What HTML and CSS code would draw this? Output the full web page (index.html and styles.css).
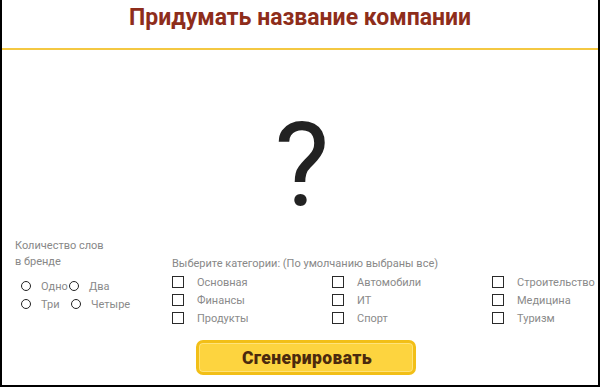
FILE: index.html
```html
<!DOCTYPE html>
<html lang="ru">
<head>
<meta charset="utf-8">
<title>Придумать название компании</title>
<link rel="stylesheet" href="styles.css">
</head>
<body>
<div class="frame">
  <header class="top">
    <h1 class="title">Придумать название компании</h1>
  </header>
  <div class="result">?</div>
  <section class="options">
    <div class="words">
      <div class="caption">Количество слов<br>в бренде</div>
      <div class="radios">
        <div class="radio-row">
          <label class="radio r1"><span class="circle"></span><span class="rtext">Одно</span></label>
          <label class="radio"><span class="circle"></span><span class="rtext">Два</span></label>
        </div>
        <div class="radio-row">
          <label class="radio r1 wide"><span class="circle"></span><span class="rtext">Три</span></label>
          <label class="radio"><span class="circle"></span><span class="rtext">Четыре</span></label>
        </div>
      </div>
    </div>
    <div class="cats">
      <div class="caption">Выберите категории: (По умолчанию выбраны все)</div>
      <div class="cat-grid">
        <label class="cat"><span class="box"></span>Основная</label>
        <label class="cat"><span class="box"></span>Автомобили</label>
        <label class="cat"><span class="box"></span>Строительство</label>
        <label class="cat"><span class="box"></span>Финансы</label>
        <label class="cat"><span class="box"></span>ИТ</label>
        <label class="cat"><span class="box"></span>Медицина</label>
        <label class="cat"><span class="box"></span>Продукты</label>
        <label class="cat"><span class="box"></span>Спорт</label>
        <label class="cat"><span class="box"></span>Туризм</label>
      </div>
    </div>
  </section>
  <div class="actions">
    <button class="generate">Сгенерировать</button>
  </div>
</div>
</body>
</html>
```

FILE: styles.css
```css
* { box-sizing: border-box; }
html, body { margin: 0; padding: 0; background: #fff; }
body { font-family: Roboto, "Liberation Sans", Arial, sans-serif; }

.frame {
  width: 600px;
  height: 387px;
  border-left: 2px solid #000;
  border-right: 2px solid #000;
  border-bottom: 2px solid #000;
  display: flex;
  flex-direction: column;
  overflow: hidden;
}

.top {
  height: 50px;
  border-bottom: 2px solid #f4c842;
  padding-bottom: 12px;
}
.title {
  margin: 0;
  text-align: center;
  font-size: 23px;
  line-height: 35px;
  font-weight: 700;
  color: #8e2d1b;
}

.result {
  margin-top: 57px;
  height: 116px;
  font-size: 116px;
  line-height: 116px;
  text-align: center;
  color: #222;
  padding-left: 4px;
}

.options {
  margin-top: 15px;
  display: flex;
  align-items: flex-start;
  padding-left: 13px;
}

.caption {
  font-size: 11px;
  line-height: 16px;
  color: #888;
  white-space: nowrap;
}

.words { width: 157px; flex: none; }
.radios { margin-top: 7px; }
.radio-row { display: flex; height: 18px; align-items: center; }
.radio {
  display: flex;
  align-items: center;
  font-size: 11px;
  color: #8a8a8a;
}
.r1 { width: 54px; padding-left: 6px; }
.r1.wide { width: 56px; }
.circle {
  width: 10px;
  height: 10px;
  border: 1.8px solid #222;
  border-radius: 50%;
  margin-right: 10px;
  flex: none;
}
.radio:not(.r1) .circle { margin-right: 10px; }

.cats { margin-top: 18px; flex: none; }
.cat-grid {
  margin-top: 1px;
  display: grid;
  grid-template-columns: 160px 160px 100px;
  grid-auto-rows: 18px;
}
.cat {
  display: flex;
  align-items: center;
  font-size: 11px;
  color: #8a8a8a;
  white-space: nowrap;
}
.box {
  width: 12px;
  height: 12px;
  border: 1.6px solid #2a2a2a;
  margin-right: 13px;
  flex: none;
}

.actions {
  margin-top: 13px;
  padding-left: 194px;
}
.generate {
  display: block;
  width: 220px;
  height: 35px;
  border: 3px solid #f2bf17;
  border-radius: 7px;
  background: #fdd43f;
  box-shadow: inset 0 0 0 1px #ffe278;
  font-family: Roboto, "Liberation Sans", Arial, sans-serif;
  font-weight: 900;
  font-size: 17.5px;
  color: #4b2a0e;
  padding: 0 0 0 2px;
  letter-spacing: 0.4px;
}
```
